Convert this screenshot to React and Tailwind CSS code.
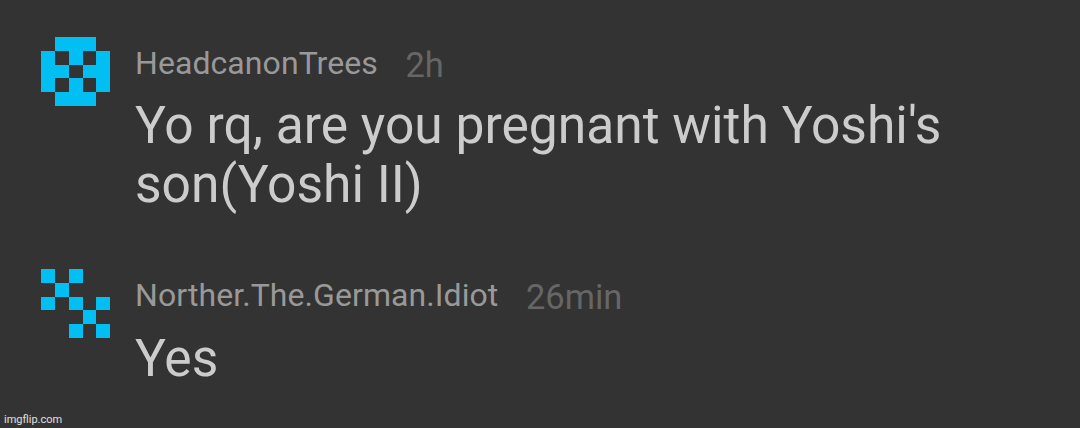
import React from 'react';

const comments = [
  {
    id: 1,
    name: 'HeadcanonTrees',
    time: '2h',
    lines: ["Yo rq, are you pregnant with Yoshi's", 'son(Yoshi II)'],
    bodyClass: 'pt-3.5',
    pixels: ['01110', '10101', '11011', '10101', '01110'],
  },
  {
    id: 2,
    name: 'Norther.The.German.Idiot',
    time: '26min',
    lines: ['Yes'],
    bodyClass: 'pt-[15px]',
    pixels: ['10100', '01000', '10101', '00010', '00101'],
  },
];

// Cell edges of the 5x5 avatar, snapped to whole pixels
const cols = [0, 14, 28, 42, 55, 69];
const rows = [0, 14, 28, 41, 55, 69];

const Avatar = ({ pixels }) => (
  <svg width="69" height="69" viewBox="0 0 69 69" shapeRendering="crispEdges" className="shrink-0">
    {pixels.map((row, y) =>
      row.split('').map((p, x) =>
        p === '1' ? (
          <rect
            key={`${x}-${y}`}
            x={cols[x]}
            y={rows[y]}
            width={cols[x + 1] - cols[x]}
            height={rows[y + 1] - rows[y]}
            fill="#02bff3"
          />
        ) : null
      )
    )}
  </svg>
);

const Comment = ({ comment }) => (
  <div className="flex gap-[25px] pl-[41px]">
    <Avatar pixels={comment.pixels} />
    <div className="pt-[7px]">
      <div className="flex h-[38px] items-start gap-[27.5px]">
        <span className="text-[32px] leading-[38px] tracking-[0.07px] text-[#999999]">{comment.name}</span>
        <span className="pt-0.5 text-[34.5px] leading-[38px] text-[#666666]">{comment.time}</span>
      </div>
      <div className={`${comment.bodyClass} text-[51.55px] leading-[59px] text-[#cccccc]`}>
        {comment.lines.map((line) => (
          <p key={line} className="whitespace-nowrap">{line}</p>
        ))}
      </div>
    </div>
  </div>
);

const App = () => {
  return (
    <div className="relative h-[428px] w-[1080px] overflow-hidden bg-[#333333] pt-[37px] font-[Roboto,sans-serif]">
      <div className="h-[232px]">
        <Comment comment={comments[0]} />
      </div>
      <Comment comment={comments[1]} />
      <span className="absolute bottom-0.5 left-1 text-[11px] leading-[13px] text-[#e0e0e0]">imgflip.com</span>
    </div>
  );
};

export default App;
